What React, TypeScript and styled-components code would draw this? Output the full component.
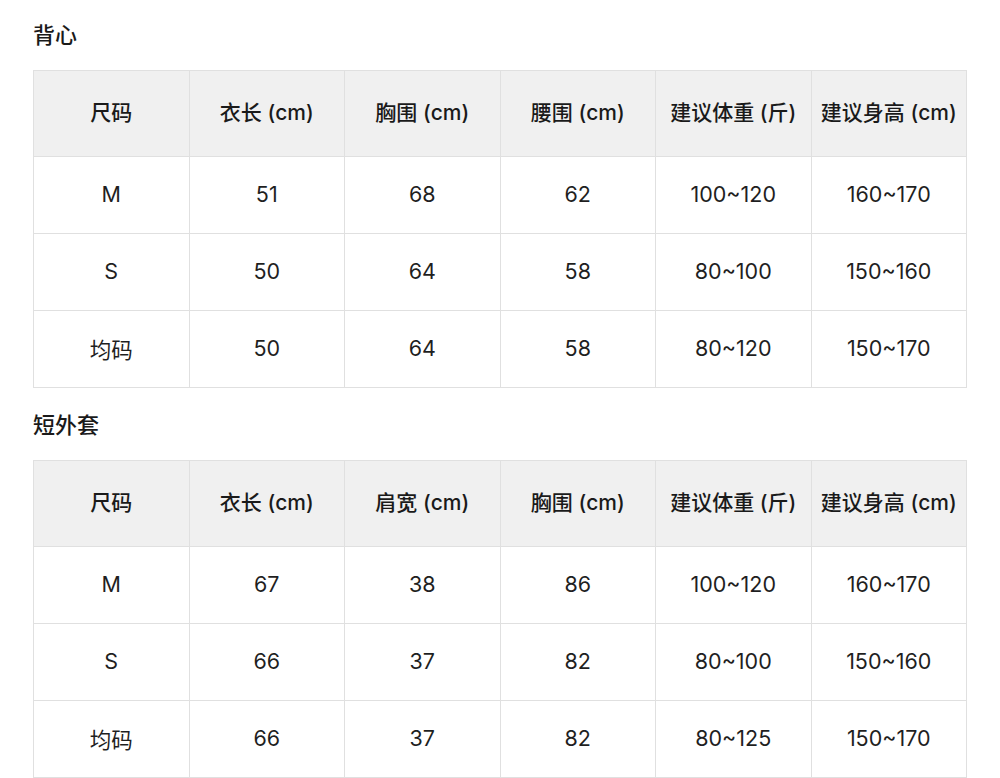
import React from "react";
import styled, { createGlobalStyle } from "styled-components";

const GlobalStyle = createGlobalStyle`
  html, body {
    margin: 0;
    padding: 0;
    background: #ffffff;
  }
  body {
    font-family: Inter, "Noto Sans CJK SC", sans-serif;
    color: #1f1f1f;
  }
`;

const Page = styled.div`
  padding: 20px 33px 0 33px;
  display: flex;
  flex-direction: column;
  gap: 22px;
`;

const Section = styled.section`
  display: flex;
  flex-direction: column;
  gap: 20px;
`;

const Title = styled.h2`
  margin: 0;
  font-size: 22px;
  line-height: 30px;
  font-weight: 500;
  color: #1a1a1a;
`;

const Table = styled.table`
  width: 934px;
  border-collapse: collapse;
  table-layout: fixed;
`;

const HeadCell = styled.th`
  height: 80px;
  padding: 0 0 5px 0;
  background: #f0f0f0;
  border: 1px solid #e0e0e0;
  font-size: 21px;
  font-weight: 500;
  color: #1a1a1a;
  text-align: center;
  vertical-align: middle;
  white-space: nowrap;
`;

const Cell = styled.td`
  height: 74px;
  padding: 0 0 2px 0;
  border: 1px solid #e0e0e0;
  font-size: 21.5px;
  font-weight: 400;
  color: #1f1f1f;
  text-align: center;
  vertical-align: middle;
`;

type SizeTable = {
  title: string;
  columns: string[];
  rows: string[][];
};

const tables: SizeTable[] = [
  {
    title: "背心",
    columns: ["尺码", "衣长 (cm)", "胸围 (cm)", "腰围 (cm)", "建议体重 (斤)", "建议身高 (cm)"],
    rows: [
      ["M", "51", "68", "62", "100~120", "160~170"],
      ["S", "50", "64", "58", "80~100", "150~160"],
      ["均码", "50", "64", "58", "80~120", "150~170"],
    ],
  },
  {
    title: "短外套",
    columns: ["尺码", "衣长 (cm)", "肩宽 (cm)", "胸围 (cm)", "建议体重 (斤)", "建议身高 (cm)"],
    rows: [
      ["M", "67", "38", "86", "100~120", "160~170"],
      ["S", "66", "37", "82", "80~100", "150~160"],
      ["均码", "66", "37", "82", "80~125", "150~170"],
    ],
  },
];

export default function App() {
  return (
    <>
      <GlobalStyle />
      <Page>
        {tables.map((t) => (
          <Section key={t.title}>
            <Title>{t.title}</Title>
            <Table>
              <thead>
                <tr>
                  {t.columns.map((c) => (
                    <HeadCell key={c}>{c}</HeadCell>
                  ))}
                </tr>
              </thead>
              <tbody>
                {t.rows.map((r, i) => (
                  <tr key={i}>
                    {r.map((v, j) => (
                      <Cell key={j}>{v}</Cell>
                    ))}
                  </tr>
                ))}
              </tbody>
            </Table>
          </Section>
        ))}
      </Page>
    </>
  );
}
